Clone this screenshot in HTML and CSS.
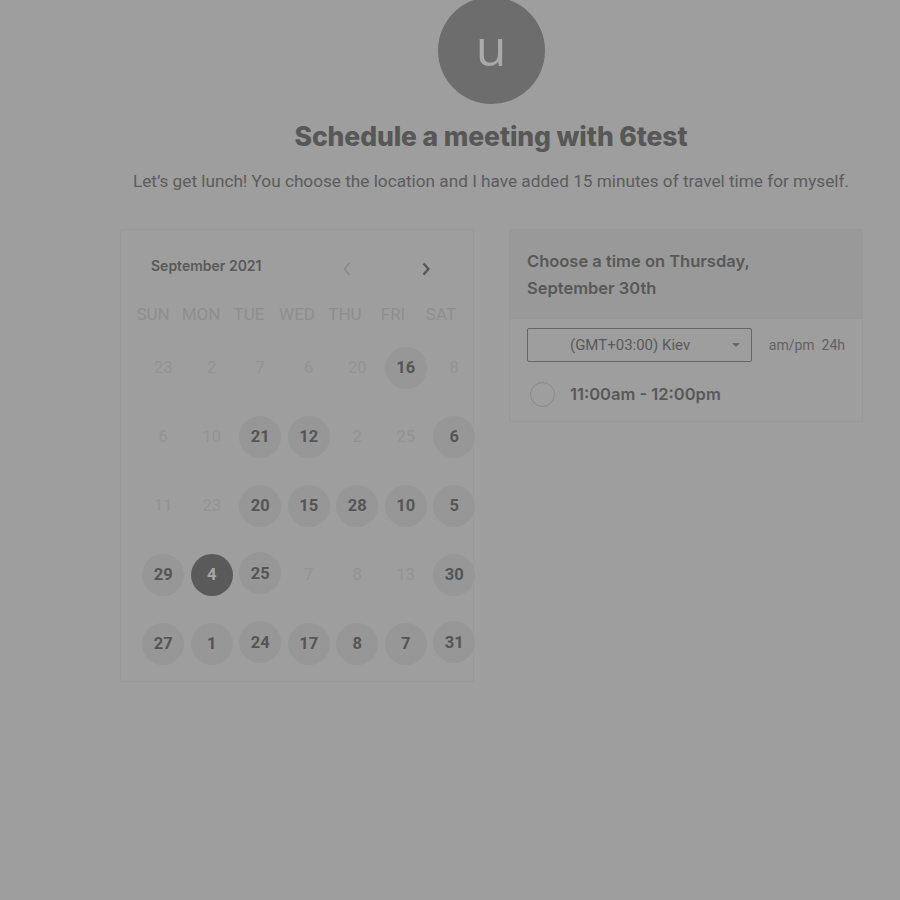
FILE: index.html
```html
<!DOCTYPE html>
<html>
<head>
<meta charset="utf-8">
<link rel="stylesheet" href="styles.css">
</head>
<body>
<div class="page">
  <header class="intro">
    <div class="avatar">u</div>
    <h1 class="title">Schedule a meeting with 6test</h1>
    <p class="subtitle">Let’s get lunch! You choose the location and I have added 15 minutes of travel time for myself.</p>
  </header>
  <main class="cards">
    <section class="calendar">
      <div class="cal-head">
        <span class="month">September 2021</span>
        <span class="nav prev"><svg width="10" height="16" viewBox="0 0 10 16"><path d="M7.5 2 L2.5 8 L7.5 14" fill="none" stroke="#8a8a8a" stroke-width="1.6"/></svg></span>
        <span class="nav next"><svg width="10" height="16" viewBox="0 0 10 16"><path d="M2.5 2.5 L7.5 8 L2.5 13.5" fill="none" stroke="#555" stroke-width="2.2"/></svg></span>
      </div>
      <div class="weekdays">
        <span>SUN</span><span>MON</span><span>TUE</span><span>WED</span><span>THU</span><span>FRI</span><span>SAT</span>
      </div>
      <div class="days">
        <span class="d off">23</span><span class="d off">2</span><span class="d off">7</span><span class="d off">6</span><span class="d off">20</span><span class="d on">16</span><span class="d off">8</span>
        <span class="d off">6</span><span class="d off">10</span><span class="d on">21</span><span class="d on">12</span><span class="d off">2</span><span class="d off">25</span><span class="d on">6</span>
        <span class="d off">11</span><span class="d off">23</span><span class="d on">20</span><span class="d on">15</span><span class="d on">28</span><span class="d on">10</span><span class="d on">5</span>
        <span class="d on">29</span><span class="d sel">4</span><span class="d on up">25</span><span class="d off">7</span><span class="d off">8</span><span class="d off">13</span><span class="d on">30</span>
        <span class="d on">27</span><span class="d on">1</span><span class="d on up">24</span><span class="d on">17</span><span class="d on">8</span><span class="d on">7</span><span class="d on up">31</span>
      </div>
    </section>
    <section class="times">
      <div class="times-head">Choose a time on Thursday, September 30th</div>
      <div class="times-body">
        <div class="tz-row">
          <div class="select">
            <span class="select-text">(GMT+03:00) Kiev</span>
            <span class="caret"></span>
          </div>
          <span class="fmt">am/pm&nbsp;&nbsp;24h</span>
        </div>
        <div class="slot">
          <span class="radio"></span>
          <span class="slot-text">11:00am - 12:00pm</span>
        </div>
      </div>
    </section>
  </main>
</div>
</body>
</html>
```
FILE: styles.css
```css
html, body {
  margin: 0;
  padding: 0;
  background: #9e9e9e;
}
body {
  width: 900px;
  height: 900px;
  overflow: hidden;
  font-family: Roboto, "Liberation Sans", sans-serif;
  color: #575757;
}
.page {
  width: 742px;
  margin-left: 120px;
}
.intro {
  display: flex;
  flex-direction: column;
  align-items: center;
}
.avatar {
  width: 107px;
  height: 107px;
  margin-top: -3px;
  border-radius: 50%;
  background: #6d6d6d;
  color: #a9a9a9;
  font-family: "Open Sans", sans-serif;
  font-size: 50px;
  line-height: 100px;
  text-align: center;
}
.title {
  margin: 16px 0 0;
  font-family: Inter, sans-serif;
  font-weight: 800;
  font-size: 26.5px;
  line-height: 32px;
  color: #575757;
  letter-spacing: -0.1px;
}
.subtitle {
  margin: 19px 0 0;
  font-size: 17.2px;
  line-height: 20px;
  color: #5c5c5c;
  white-space: nowrap;
}
.cards {
  margin-top: 38px;
  display: flex;
  gap: 35px;
  align-items: flex-start;
}
.calendar {
  width: 352px;
  height: 451px;
  border: 1px solid #989898;
  border-radius: 2px;
}
.cal-head {
  display: flex;
  align-items: center;
  height: 30px;
  margin-top: 24px;
  padding-left: 30px;
}
.month {
  font-family: Inter, sans-serif;
  font-weight: 600;
  font-size: 14px;
  color: #585858;
  width: 191px;
  margin-top: -8px;
}
.nav {
  display: flex;
  align-items: center;
  justify-content: center;
  width: 10px;
  height: 16px;
}
.prev { margin-left: 0; }
.next { margin-left: 69px; }
.weekdays {
  display: grid;
  grid-template-columns: repeat(7, 48px);
  margin-top: 20px;
  padding-left: 8px;
  height: 20px;
  line-height: 20px;
  font-size: 17px;
  color: #8e8e8e;
  text-align: center;
}
.days {
  display: grid;
  grid-template-columns: repeat(7, 48.5px);
  grid-auto-rows: 69px;
  width: 340px;
  margin-top: 9px;
  padding-left: 18px;
}
.d {
  justify-self: center;
  align-self: center;
  width: 42px;
  height: 42px;
  border-radius: 50%;
  display: flex;
  align-items: center;
  justify-content: center;
  font-size: 16.5px;
}
.off {
  color: #939393;
}
.on {
  background: #979797;
  color: #555;
  font-weight: 700;
}
.up {
  margin-top: -3px;
}
.sel {
  background: #5a5a5a;
  color: #a8a8a8;
  font-weight: 700;
}
.times {
  width: 352px;
  border: 1px solid #989898;
  border-radius: 2px;
}
.times-head {
  background: #999;
  height: 89px;
  box-sizing: border-box;
  padding: 18px 60px 0 17px;
  font-family: Inter, sans-serif;
  font-weight: 600;
  font-size: 16.5px;
  line-height: 27px;
  color: #585858;
  border-bottom: 1px solid #979797;
}
.times-body {
  padding: 9px 17px 4px;
}
.tz-row {
  display: flex;
  align-items: center;
}
.select {
  width: 224px;
  height: 32px;
  border: 1px solid #666;
  border-radius: 2px;
  display: flex;
  align-items: center;
  position: relative;
}
.select-text {
  margin-left: 42px;
  font-size: 15px;
  color: #5a5a5a;
}
.caret {
  position: absolute;
  right: 11px;
  top: 14px;
  width: 0;
  height: 0;
  border-left: 4px solid transparent;
  border-right: 4px solid transparent;
  border-top: 4px solid #666;
}
.fmt {
  margin-left: 17px;
  font-size: 14px;
  color: #626262;
}
.slot {
  display: flex;
  align-items: center;
  margin-top: 9px;
  height: 46px;
}
.radio {
  width: 23px;
  height: 23px;
  border: 1.5px solid #8a8a8a;
  border-radius: 50%;
  margin-left: 3px;
}
.slot-text {
  margin-left: 15px;
  font-family: Inter, sans-serif;
  font-weight: 600;
  font-size: 16.5px;
  color: #585858;
}
```
